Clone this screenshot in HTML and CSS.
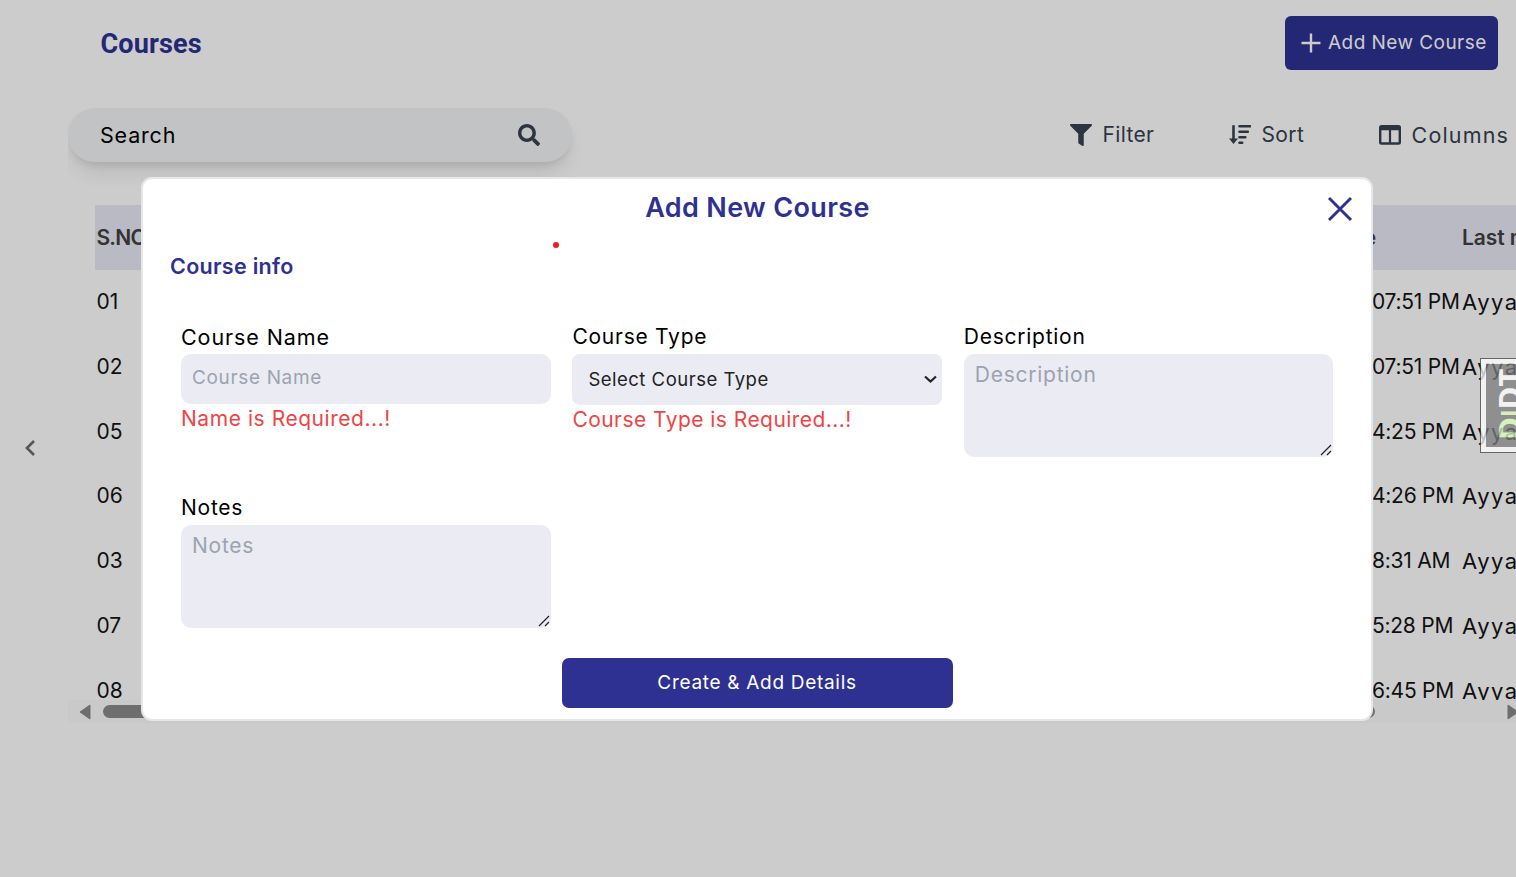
FILE: index.html
```html
<!DOCTYPE html>
<html lang="en">
<head>
<meta charset="utf-8">
<title>Courses</title>
<link rel="stylesheet" href="styles.css">
</head>
<body>
<div class="page">
  <aside class="rail">
    <svg width="12" height="18" viewBox="0 0 12 18"><path d="M10 2L3 9l7 7" fill="none" stroke="#6b6b6b" stroke-width="2.6"/></svg>
  </aside>
  <main class="content">
    <header class="topbar">
      <h1>Courses</h1>
      <button class="add"><svg width="20" height="20" viewBox="0 0 20 20"><path d="M10 .5v19M.5 10h19" stroke="#fff" stroke-width="2.4" fill="none"/></svg><span class="t-add">Add New Course</span></button>
    </header>
    <div class="tools">
      <div class="search">
        <span class="t-search">Search</span>
        <svg width="22" height="22" viewBox="0 0 512 512"><path fill="#374151" d="M505 442.700L405.300 343c-4.500-4.500-10.600-7-17-7H372c27.600-35.300 44-79.700 44-128C416 93.100 322.900 0 208 0S0 93.100 0 208s93.100 208 208 208c48.300 0 92.700-16.400 128-44v16.300c0 6.400 2.500 12.500 7 17l99.700 99.700c9.400 9.400 24.600 9.400 33.900 0l28.300-28.300c9.400-9.400 9.400-24.600.1-34zM208 336c-70.700 0-128-57.200-128-128 0-70.700 57.200-128 128-128 70.700 0 128 57.200 128 128 0 70.700-57.200 128-128 128z"/></svg>
      </div>
      <div class="actions">
        <div class="action filter"><svg width="22" height="22" viewBox="0 0 512 512"><path fill="#374151" d="M488 0H24C2.700 0-8 25.900 7.100 41L192 225.900V432c0 7.800 3.800 15.200 10.200 19.700l80 56C298 518.700 320 507.500 320 488V225.900L505 41C520 25.900 509.300 0 488 0z"/></svg><span class="t-filter">Filter</span></div>
        <div class="action sort"><svg width="22" height="22" viewBox="0 0 22 22" fill="none" stroke="#374151"><path d="M4.500 1.200v15" stroke-width="2.600"/><path d="M0 14.500h9L4.500 20z" fill="#374151" stroke="none"/><path d="M10.500 2.300H21M10.500 7.800h8.300M10.500 13.300h5.800M10.500 18.800h2.700" stroke-width="2.600" stroke-linecap="round"/></svg><span class="t-filter">Sort</span></div>
        <div class="action"><svg width="22" height="20" viewBox="0 0 22 20"><path fill="#374151" fill-rule="evenodd" d="M2.500 0h17A2.500 2.500 0 0 1 22 2.500v14.700a2.500 2.500 0 0 1-2.500 2.500h-17A2.500 2.500 0 0 1 0 17.200V2.500A2.500 2.500 0 0 1 2.500 0zM2.400 5.300v11.900h7.500V5.300zm9.700 0v11.900h7.500V5.300z"/></svg><span class="t-columns">Columns</span></div>
      </div>
    </div>
    <section class="table">
      <div class="row head"><span class="no">S.NO</span><span class="date">Date</span><span class="by">Last modified</span></div>
      <div class="row"><span class="no">01</span><span class="date">07:51 PM</span><span class="by">Ayya</span></div>
      <div class="row"><span class="no">02</span><span class="date">07:51 PM</span><span class="by">Ayya</span></div>
      <div class="row"><span class="no">05</span><span class="date">4:25 PM</span><span class="by">Ayya</span></div>
      <div class="row"><span class="no">06</span><span class="date">4:26 PM</span><span class="by">Ayya</span></div>
      <div class="row"><span class="no">03</span><span class="date">8:31 AM</span><span class="by">Ayya</span></div>
      <div class="row"><span class="no">07</span><span class="date">5:28 PM</span><span class="by">Ayya</span></div>
      <div class="row"><span class="no">08</span><span class="date">6:45 PM</span><span class="by">Ayya</span></div>
    </section>
    <div class="scrollbar">
      <svg width="12" height="16" viewBox="0 0 12 16"><path d="M11 1v14L1 8z" fill="#8a8a8a" stroke="#8a8a8a" stroke-linejoin="round"/></svg>
      <i class="thumb"></i>
      <svg width="12" height="16" viewBox="0 0 12 16"><path d="M1 1v14L11 8z" fill="#8a8a8a" stroke="#8a8a8a" stroke-linejoin="round"/></svg>
    </div>
  </main>
</div>

<div class="overlay">
  <form class="modal">
    <div class="modal-head">
      <h2>Add New Course</h2>
      <svg width="24" height="24" viewBox="0 0 24 24"><path d="M1 1l22 22M23 1L1 23" stroke="#2e3192" stroke-width="2.900" fill="none"/></svg>
    </div>
    <h3>Course info</h3>
    <div class="fields">
      <div class="field"><label class="t-name">Course Name</label><div class="input"><span class="t-pname">Course Name</span></div><p class="t-ename">Name is Required...!</p></div>
      <div class="field"><label class="t-desc">Course Type</label><div class="input select"><span class="t-select">Select Course Type</span><svg width="13" height="9" viewBox="0 0 13 9"><path d="M1 1.500l5.500 5 5.500-5" fill="none" stroke="#222" stroke-width="2.200"/></svg></div><p class="t-etype">Course Type is Required...!</p></div>
      <div class="field"><label class="t-desc">Description</label><div class="area"><span class="t-desc">Description</span><svg width="12" height="12" viewBox="0 0 12 12"><path d="M1 11L11 1M7 11l4-4" stroke="#222" stroke-width="1.200" fill="none"/></svg></div></div>
      <div class="field"><label class="t-desc">Notes</label><div class="area"><span class="t-desc">Notes</span><svg width="12" height="12" viewBox="0 0 12 12"><path d="M1 11L11 1M7 11l4-4" stroke="#222" stroke-width="1.200" fill="none"/></svg></div></div>
    </div>
    <button class="submit" type="button"><span class="t-create">Create &amp; Add Details</span></button>
    <i class="dot"></i>
  </form>
</div>
<div class="djdt"><div class="djdt-in"><span><em>D<small>J</small></em>DT</span></div></div>
</body>
</html>
```
FILE: styles.css
```css
* { box-sizing: border-box; }
body { margin: 0; height: 877px; overflow: hidden; background: #fff; color: #000; font: 400 21px/32px Inter, "Open Sans", sans-serif; }
h1, h2, h3, p { margin: 0; }
button { border: 0; font: inherit; color: #fff; background: #2e3192; }
svg { display: block; flex: none; }
span, label, p { white-space: nowrap; }
.page { display: flex; width: 1516px; height: 877px; }
.rail { width: 68px; padding: 439px 0 0 24px; flex: none; }
.content { flex: 1; min-width: 0; overflow: hidden; }

.topbar { display: flex; justify-content: space-between; padding: 16px 18px 0 32.500px; height: 108px; }
h1 { font: 700 27px/56px Roboto, sans-serif; letter-spacing: .15px; color: #2e3192; }
.add { width: 213px; height: 54px; border-radius: 6px; padding: 0 0 0 16px; display: flex; align-items: center; gap: 7px; font-size: 19px; }
.t-add { letter-spacing: .45px; }
.tools { display: flex; justify-content: space-between; height: 97px; }
.search { width: 504px; height: 54px; border-radius: 27px; background: #f3f4f6; padding: 0 32px; display: flex; align-items: center; justify-content: space-between; box-shadow: 0 13px 20px -4px rgba(0,0,0,.1), 0 5px 8px -3px rgba(0,0,0,.1); }
.t-search { font-size: 21.500px; letter-spacing: .8px; }
.actions { display: flex; height: 54px; color: #374151; padding-right: 7px; }
.action { display: flex; align-items: center; gap: 10.500px; }
.filter { width: 159px; }
.sort { width: 150px; }
.t-filter { letter-spacing: .35px; }
.t-columns { font-size: 21.500px; letter-spacing: 1.150px; }

.table { margin-left: 27px; height: 495px; overflow: hidden; color: #141414; }
.row { display: grid; grid-template-columns: 1275.500px 90px 200px; height: 64.800px; align-items: center; padding-left: 1.500px; width: 1600px; }
.date { letter-spacing: -.25px; }
.by { font-size: 22px; letter-spacing: 1.500px; }
.head { background: #e9e9f5; color: #404040; font-weight: 600; height: 65px; }
.head + .row { margin-top: -.4px; }
.head .no { letter-spacing: -.8px; }
.head .date { margin-left: -42px; }
.head .by { font-size: 21px; letter-spacing: -.1px; }
.scrollbar { height: 23px; background: #fcfcfc; display: flex; align-items: center; justify-content: space-between; padding: 0 0 0 11px; margin-right: -3px; }
.thumb { width: 1272px; height: 13px; border-radius: 7px; background: #8a8a8a; margin-right: auto; margin-left: 12px; }

.overlay { position: fixed; inset: 0; background: rgba(0,0,0,.2); padding: 177px 0 0 141px; }
.modal { position: relative; width: 1232px; height: 544px; background: #fff; border: 2px solid #e5e7eb; border-radius: 11px; padding: 0 27px; color: #000; }
.modal-head { display: grid; grid-template-columns: 1fr auto; align-items: center; height: 59px; margin-right: -8px; }
.modal-head h2 { font-size: 27px; font-weight: 600; letter-spacing: .35px; color: #2e3192; text-align: center; margin: -2px 0 0 17px; }
h3 { font-size: 21.500px; font-weight: 600; line-height: 56px; letter-spacing: .3px; color: #2e3192; }
.fields { display: grid; grid-template-columns: repeat(3, 369.700px); column-gap: 21.700px; grid-template-rows: 171px 167px; margin: 26px 0 0 11px; }
.field > label { display: block; height: 33px; padding-top: .5px; }
.t-name { font-size: 21.500px; letter-spacing: .9px; }
.t-pname { letter-spacing: .65px; font-size: 19px; margin-top: -2px; }
.t-ename { letter-spacing: .55px; }
.t-etype { letter-spacing: .45px; }
.t-desc { letter-spacing: .75px; }
.t-select { letter-spacing: .5px; margin-top: -1px; }
.t-create { font-size: 19px; letter-spacing: .7px; }
.input { height: 50px; border-radius: 10px; background: #eaebf3; padding: 0 11px; display: flex; align-items: center; color: #9ca3af; font-size: 18.500px; margin-top: .5px; }
.select { height: 51px; border-radius: 8px; padding: 0 5px 0 16px; justify-content: space-between; color: #222; }
.field p { color: #ef4444; line-height: 31px; margin-top: -.5px; }
.area { height: 103px; border-radius: 10px; background: #eaebf3; padding: 5px 1px 1px 11px; display: flex; justify-content: space-between; color: #9ca3af; margin-top: .5px; }
.area svg { align-self: flex-end; }
.submit { display: block; width: 391px; height: 50px; margin: 0 auto; border-radius: 7px; padding: 0 0 2px; }
.dot { position: absolute; left: 410px; top: 63px; width: 6px; height: 6px; border-radius: 50%; background: #ed1c24; }

.djdt { position: absolute; left: 1480px; top: 358px; width: 36px; height: 95px; border: 1px solid #444; border-right: 0; background: #fff; padding: 5px 0 5px 5px; overflow: hidden; opacity: .75; }
.djdt-in { height: 83px; width: 60px; background: #7b7b7b; padding-left: 6px; }
.djdt span { display: block; writing-mode: vertical-rl; transform: rotate(180deg); font: 700 31px/34px "Open Sans", sans-serif; color: #fff; height: 76px; width: 34px; }
.djdt em { font-style: normal; color: #ddfcbc; }
.djdt small { font-size: 23px; }
```
